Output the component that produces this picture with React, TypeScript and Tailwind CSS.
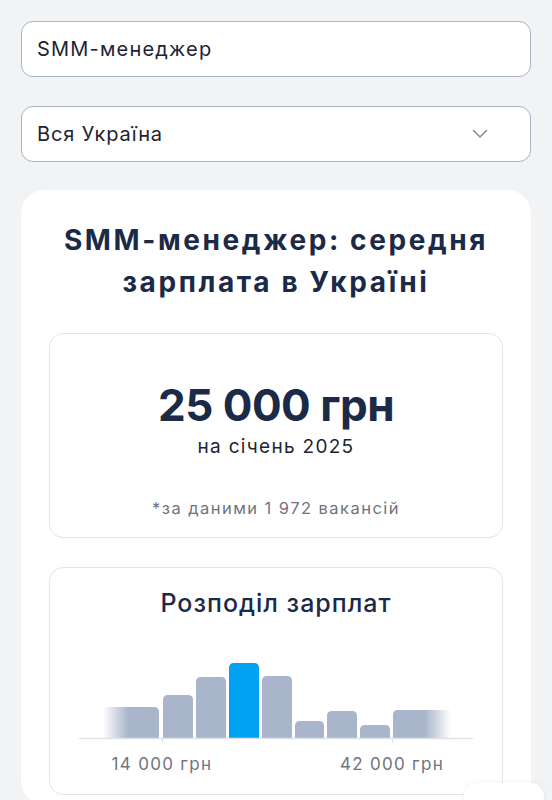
import React from "react";

const bars = [
  { x: 84, top: 44, w: 30 },
  { x: 117, top: 26, w: 30 },
  { x: 150, top: 12, w: 30, blue: true },
  { x: 183, top: 25, w: 30 },
  { x: 216, top: 70, w: 29 },
  { x: 248, top: 60, w: 30 },
  { x: 281, top: 74, w: 30 },
];

function Chart() {
  const base = 87;
  return (
    <svg width="394" height="94" viewBox="0 0 394 94">
      <defs>
        <linearGradient id="fadeL" x1="0" x2="1" y1="0" y2="0">
          <stop offset="0" stopColor="#a9b5ca" stopOpacity="0" />
          <stop offset="0.45" stopColor="#a9b5ca" stopOpacity="1" />
          <stop offset="1" stopColor="#a9b5ca" stopOpacity="1" />
        </linearGradient>
        <linearGradient id="fadeR" x1="0" x2="1" y1="0" y2="0">
          <stop offset="0" stopColor="#a9b5ca" stopOpacity="1" />
          <stop offset="0.55" stopColor="#a9b5ca" stopOpacity="1" />
          <stop offset="1" stopColor="#a9b5ca" stopOpacity="0" />
        </linearGradient>
      </defs>
      <path d={`M24 ${base} V56 H75 Q80 56 80 61 V${base} Z`} fill="url(#fadeL)" />
      {bars.map((b, i) => (
        <path
          key={i}
          d={`M${b.x} ${base} V${b.top + 5} Q${b.x} ${b.top} ${b.x + 5} ${b.top} H${b.x + b.w - 5} Q${b.x + b.w} ${b.top} ${b.x + b.w} ${b.top + 5} V${base} Z`}
          fill={b.blue ? "#02a2f2" : "#a9b5ca"}
        />
      ))}
      <path d={`M314 ${base} V64 Q314 59 319 59 H372 V${base} Z`} fill="url(#fadeR)" />
      <line x1="0" y1={base + 0.5} x2="394" y2={base + 0.5} stroke="#dfe3e9" strokeWidth="1.5" />
      <line x1="83.5" y1={base} x2="83.5" y2={base + 5} stroke="#dfe3e9" strokeWidth="1" />
      <line x1="313.5" y1={base} x2="313.5" y2={base + 5} stroke="#dfe3e9" strokeWidth="1" />
    </svg>
  );
}

export default function App() {
  return (
    <div
      className="min-h-[800px] w-[552px] overflow-hidden bg-[#f2f3f5] px-[21px] pt-[21px]"
      style={{ fontFamily: "Inter, 'Noto Sans', sans-serif" }}
    >
      <div className="flex h-[56px] items-center rounded-[12px] border border-[#aab4c4] bg-white px-[15px] text-[20px] tracking-[1.2px] text-[#1d2433]">
        SMM-менеджер
      </div>
      <div className="mt-[29px] flex h-[56px] items-center justify-between rounded-[12px] border border-[#aab4c4] bg-white pl-[15px] pr-[42px] text-[20px] tracking-[0.9px] text-[#1d2433]">
        <span>Вся Україна</span>
        <svg width="16" height="10" viewBox="0 0 16 10">
          <path d="M1.5 1.5 L8 8 L14.5 1.5" fill="none" stroke="#8790a0" strokeWidth="1.6" strokeLinecap="round" strokeLinejoin="round" />
        </svg>
      </div>
      <div className="relative mt-[28px] rounded-[24px] bg-white px-[20px] pb-[10px] pt-[29px]">
        <h1 className="text-center text-[28px] font-bold leading-[42px] tracking-[2.6px] text-[#1b2a47]">
          SMM-менеджер: середня
          <br />
          зарплата в Україні
        </h1>
        <div className="mx-[8px] mt-[30px] flex h-[205px] flex-col items-center rounded-[14px] border border-[#e1e4e9] pt-[43px]">
          <div className="text-[44px] font-bold leading-[56px] tracking-[-0.5px] text-[#1b2a47]">25 000 грн</div>
          <div className="mt-[1px] text-[19px] leading-[26px] tracking-[1.3px] text-[#1d2433]">на січень 2025</div>
          <div className="mt-[36px] text-[16.5px] leading-[24px] tracking-[1.45px] text-[#6f7480]">*за даними 1 972 вакансій</div>
        </div>
        <div className="mx-[8px] mt-[29px] flex h-[228px] flex-col items-center rounded-[14px] border border-[#e1e4e9] pt-[20px]">
          <div className="text-[25px] font-medium leading-[30px] tracking-[1px] text-[#1b2a47]">Розподіл зарплат</div>
          <div className="mt-[33px]">
            <Chart />
          </div>
          <div className="mt-[8px] flex w-[394px] text-[17px] leading-[22px] tracking-[1.3px] text-[#6f7480]">
            <span className="ml-[23px] w-[120px] text-center">14 000 грн</span>
            <span className="ml-[110px] w-[120px] text-center">42 000 грн</span>
          </div>
        </div>
      </div>
      <div className="absolute left-[464px] top-[783px] h-[40px] w-[80px] rounded-[14px] bg-white shadow-[0_0_6px_rgba(0,0,0,0.06)]" />
    </div>
  );
}
